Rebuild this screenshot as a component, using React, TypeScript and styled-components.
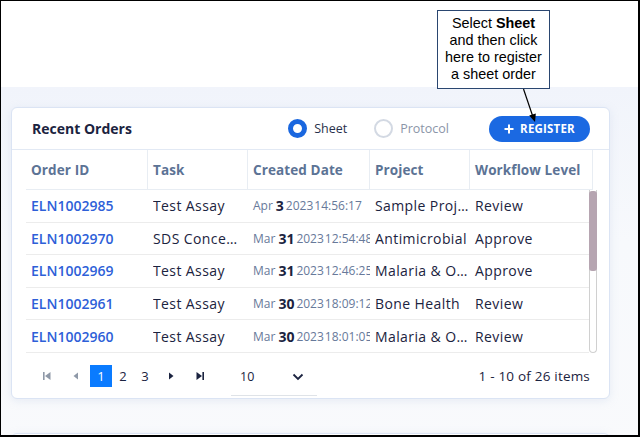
import styled, { createGlobalStyle } from "styled-components";

const GlobalStyle = createGlobalStyle`
  html, body {
    margin: 0;
    padding: 0;
    background: #ffffff;
  }
  body {
    font-family: "Open Sans", "Noto Sans", sans-serif;
  }
  * {
    box-sizing: border-box;
  }
`;

const Frame = styled.div`
  position: relative;
  width: 640px;
  height: 437px;
  border: 1px solid #000;
  border-right-width: 2px;
  border-bottom-width: 2px;
  overflow: hidden;
  display: flex;
  flex-direction: column;
  background: #ffffff;
`;

const TopStrip = styled.div`
  height: 86px;
  flex-shrink: 0;
  background: #ffffff;
`;

const Workspace = styled.div`
  flex: 1;
  background: linear-gradient(180deg, #f1f4fb 0%, #f7f9fc 40%, #f9fafc 100%);
  padding: 20px 28px 0 10px;
  display: flex;
  flex-direction: column;
  gap: 34px;
`;

const Card = styled.section`
  background: #ffffff;
  border: 1px solid #dbe4f4;
  border-radius: 6px;
  box-shadow: 0 2px 8px rgba(180, 195, 225, 0.25);
  height: 292px;
  display: flex;
  flex-direction: column;
`;

const NextCard = styled(Card)`
  height: 40px;
  flex-shrink: 0;
`;

const CardHeader = styled.div`
  height: 42px;
  display: flex;
  align-items: center;
  padding: 0 19px 0 20px;
  border-bottom: 1px solid #e2e9f4;
`;

const Title = styled.h2`
  margin: 0;
  font-size: 14px;
  font-weight: 700;
  color: #1b2340;
  flex: 1;
`;

const RadioGroup = styled.div`
  display: flex;
  align-items: center;
  gap: 27px;
  margin-right: 40px;
`;

const RadioOption = styled.label<{ $checked?: boolean }>`
  display: flex;
  align-items: center;
  gap: 7px;
  font-size: 12.5px;
  font-weight: 500;
  color: ${(p) => (p.$checked ? "#27304a" : "#8b95a8")};
`;

const RadioDot = styled.span<{ $checked?: boolean }>`
  width: 19px;
  height: 19px;
  border-radius: 50%;
  border: ${(p) => (p.$checked ? "5.5px solid #1a67df" : "2.5px solid #d3d9e3")};
  background: #ffffff;
`;

const RegisterButton = styled.button`
  width: 101px;
  height: 26px;
  border: none;
  border-radius: 13px;
  background: #1b69e2;
  color: #ffffff;
  font-family: inherit;
  font-size: 11.5px;
  font-weight: 700;
  display: flex;
  align-items: center;
  justify-content: center;
  gap: 6px;
  padding: 0;
  letter-spacing: 0.2px;
`;

const TableWrap = styled.div`
  padding: 0 0 0 14px;
`;

const COLS = "122px 100px 122px 100px 123px";

const HeadRow = styled.div`
  display: grid;
  grid-template-columns: ${COLS};
  height: 40px;
  border-bottom: 1px solid #e8edf3;
  width: 567px;
`;

const HeadCell = styled.div`
  display: flex;
  align-items: center;
  padding-left: 5px;
  border-right: 1px solid #e8edf3;
  font-size: 13.5px;
  font-weight: 700;
  color: #5c7395;
  letter-spacing: 0.1px;
`;

const BodyArea = styled.div`
  display: flex;
  height: 163px;
`;

const Rows = styled.div`
  width: 563px;
  display: flex;
  flex-direction: column;
`;

const Row = styled.div`
  display: grid;
  grid-template-columns: ${COLS};
  height: 32.6px;
  border-bottom: 1px solid #ececec;
`;

const Cell = styled.div`
  display: flex;
  align-items: center;
  padding-left: 5px;
  font-size: 14px;
  letter-spacing: 0.4px;
  color: #1b2340;
  white-space: nowrap;
  overflow: hidden;
  min-width: 0;
`;

const Ellip = styled.span<{ $max: number }>`
  display: block;
  overflow: hidden;
  text-overflow: ellipsis;
  max-width: ${(p) => p.$max}px;
`;

const OrderLink = styled.a`
  color: #2e5fd8;
  font-weight: 600;
  font-size: 14px;
  letter-spacing: 0;
  text-decoration: none;
`;

const DatePart = styled.span<{ $gap: number }>`
  font-size: 12px;
  color: #67799a;
  letter-spacing: 0;
  margin-right: ${(p) => p.$gap}px;
`;

const DateDay = styled.span`
  font-size: 14px;
  font-weight: 700;
  color: #1b2340;
  margin-right: 2px;
  letter-spacing: 0;
`;

const ScrollTrack = styled.div`
  width: 8px;
  height: 163px;
  border: 1px solid #d0d0d0;
  border-top: none;
  border-radius: 0 0 4px 4px;
  background: #ffffff;
  display: flex;
  flex-direction: column;
`;

const ScrollThumb = styled.div`
  height: 80px;
  background: #b6a5b1;
  border-radius: 3px;
  margin: 1px -1px 0;
`;

const Footer = styled.div`
  flex: 1;
  display: flex;
  align-items: center;
  padding: 0 19px 0 20px;
`;

const Pager = styled.div`
  display: flex;
  align-items: center;
  flex: 1;
`;

const NavIcon = styled.span<{ $muted?: boolean }>`
  width: 22px;
  height: 22px;
  display: flex;
  align-items: center;
  justify-content: center;
  color: ${(p) => (p.$muted ? "#8f99a8" : "#1b2340")};
  margin: 0 3.5px;
`;

const PageNum = styled.span<{ $active?: boolean }>`
  width: 22px;
  height: 22px;
  display: flex;
  align-items: center;
  justify-content: center;
  font-size: 13px;
  font-weight: 500;
  background: ${(p) => (p.$active ? "#0a7bff" : "transparent")};
  color: ${(p) => (p.$active ? "#ffffff" : "#1b2340")};
`;

const SizeSelect = styled.div`
  width: 86px;
  height: 28px;
  margin-left: 17px;
  margin-top: 12px;
  border-bottom: 1px solid #dfe3e8;
  display: flex;
  align-items: flex-start;
  justify-content: space-between;
  padding: 0 13px 0 9px;
  font-size: 12.5px;
  color: #1b2340;
`;

const ItemCount = styled.span`
  font-size: 13.5px;
  letter-spacing: 0.2px;
  color: #1b2340;
`;

const Callout = styled.div`
  position: absolute;
  left: 436px;
  top: 9px;
  width: 113px;
  height: 79px;
  border: 1px solid #2a4670;
  background: #ffffff;
  font-family: "Liberation Sans", Arial, sans-serif;
  font-size: 14.4px;
  line-height: 17px;
  color: #000000;
  text-align: center;
  padding-top: 4px;
`;

const Arrow = styled.svg`
  position: absolute;
  left: 515px;
  top: 86px;
`;

type Order = {
  id: string;
  task: string;
  month: string;
  day: string;
  time: string;
  project: string;
  level: string;
};

const orders: Order[] = [
  { id: "ELN1002985", task: "Test Assay", month: "Apr", day: "3", time: "14:56:17", project: "Sample Project", level: "Review" },
  { id: "ELN1002970", task: "SDS Concentration", month: "Mar", day: "31", time: "12:54:48", project: "Antimicrobial", level: "Approve" },
  { id: "ELN1002969", task: "Test Assay", month: "Mar", day: "31", time: "12:46:25", project: "Malaria & Other", level: "Approve" },
  { id: "ELN1002961", task: "Test Assay", month: "Mar", day: "30", time: "18:09:12", project: "Bone Health", level: "Review" },
  { id: "ELN1002960", task: "Test Assay", month: "Mar", day: "30", time: "18:01:05", project: "Malaria & Other", level: "Review" },
];

const FirstIcon = () => (
  <svg width="10" height="10" viewBox="0 0 10 10">
    <rect x="1" y="1" width="1.6" height="8" fill="currentColor" />
    <path d="M8.5 1 L3 5 L8.5 9 Z" fill="currentColor" />
  </svg>
);
const PrevIcon = () => (
  <svg width="10" height="10" viewBox="0 0 10 10">
    <path d="M7 1.5 L2.5 5 L7 8.5 Z" fill="currentColor" />
  </svg>
);
const NextIcon = () => (
  <svg width="10" height="10" viewBox="0 0 10 10">
    <path d="M3 1.5 L7.5 5 L3 8.5 Z" fill="currentColor" />
  </svg>
);
const LastIcon = () => (
  <svg width="10" height="10" viewBox="0 0 10 10">
    <path d="M1.5 1 L7 5 L1.5 9 Z" fill="currentColor" />
    <rect x="7.4" y="1" width="1.6" height="8" fill="currentColor" />
  </svg>
);

export default function App() {
  return (
    <Frame>
      <GlobalStyle />
      <TopStrip />
      <Workspace>
        <Card>
          <CardHeader>
            <Title>Recent Orders</Title>
            <RadioGroup>
              <RadioOption $checked>
                <RadioDot $checked />
                Sheet
              </RadioOption>
              <RadioOption>
                <RadioDot />
                Protocol
              </RadioOption>
            </RadioGroup>
            <RegisterButton>
              <svg width="10" height="10" viewBox="0 0 10 10">
                <path d="M5 0.5 V9.5 M0.5 5 H9.5" stroke="#fff" strokeWidth="2" />
              </svg>
              REGISTER
            </RegisterButton>
          </CardHeader>
          <TableWrap>
            <HeadRow>
              <HeadCell>Order ID</HeadCell>
              <HeadCell>Task</HeadCell>
              <HeadCell>Created Date</HeadCell>
              <HeadCell>Project</HeadCell>
              <HeadCell>Workflow Level</HeadCell>
            </HeadRow>
            <BodyArea>
              <Rows>
                {orders.map((o) => (
                  <Row key={o.id}>
                    <Cell>
                      <OrderLink>{o.id}</OrderLink>
                    </Cell>
                    <Cell>
                      <Ellip $max={89}>{o.task}</Ellip>
                    </Cell>
                    <Cell>
                      <DatePart $gap={3}>{o.month}</DatePart>
                      <DateDay>{o.day}</DateDay>
                      <DatePart $gap={1}>2023</DatePart>
                      <DatePart $gap={0}>{o.time}</DatePart>
                    </Cell>
                    <Cell>
                      <Ellip $max={94}>{o.project}</Ellip>
                    </Cell>
                    <Cell>{o.level}</Cell>
                  </Row>
                ))}
              </Rows>
              <ScrollTrack>
                <ScrollThumb />
              </ScrollTrack>
            </BodyArea>
          </TableWrap>
          <Footer>
            <Pager>
              <NavIcon $muted>
                <FirstIcon />
              </NavIcon>
              <NavIcon $muted>
                <PrevIcon />
              </NavIcon>
              <PageNum $active>1</PageNum>
              <PageNum>2</PageNum>
              <PageNum>3</PageNum>
              <NavIcon>
                <NextIcon />
              </NavIcon>
              <NavIcon>
                <LastIcon />
              </NavIcon>
              <SizeSelect>
                <span>10</span>
                <svg width="12" height="12" viewBox="0 0 12 12" style={{ marginTop: 3 }}>
                  <path d="M1.5 3.5 L6 8 L10.5 3.5" stroke="#1b2340" strokeWidth="1.8" fill="none" />
                </svg>
              </SizeSelect>
            </Pager>
            <ItemCount>1 - 10 of 26 items</ItemCount>
          </Footer>
        </Card>
        <NextCard />
      </Workspace>
      <Callout>
        Select <b>Sheet</b>
        <br />
        and then click
        <br />
        here to register
        <br />a sheet order
      </Callout>
      <Arrow width="30" height="40" viewBox="0 0 30 40">
        <line x1="7.5" y1="2" x2="17" y2="30" stroke="#000" strokeWidth="1.2" />
        <path d="M19 35 L13.2 28.5 L19.8 26.4 Z" fill="#000" />
      </Arrow>
    </Frame>
  );
}
